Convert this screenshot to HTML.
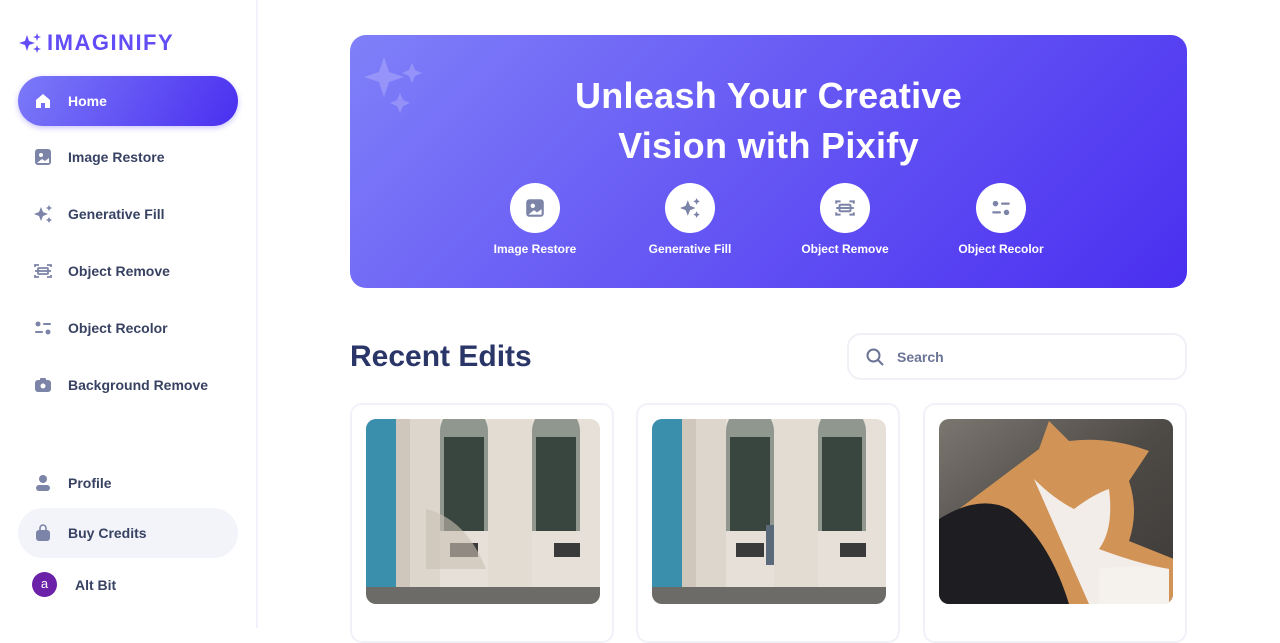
<!DOCTYPE html>
<html><head><meta charset="utf-8"><style>
*{box-sizing:border-box;margin:0;padding:0}
body{width:1280px;height:628px;overflow:hidden;background:#fff;font-family:"Liberation Sans",sans-serif;position:relative}
.side{position:absolute;left:0;top:0;width:258px;height:628px;border-right:2px solid #f1f2fb;background:#fff}
.logo{position:absolute;left:18px;top:30px;display:flex;align-items:center;gap:3px;color:#624cf5;font-weight:bold;font-size:22px;letter-spacing:1.5px}
.nav{position:absolute;left:18px;width:220px;height:50px;border-radius:25px;display:flex;align-items:center;padding-left:15px;gap:15px;font-size:14px;font-weight:bold;color:#384262}
.nav svg{width:20px;height:20px}
.home{background:linear-gradient(120deg,#7c7af8,#4a2ff0);color:#fff;box-shadow:0 2px 6px rgba(80,60,240,.3)}
.buy{background:#f3f4fa}
.main{position:absolute;left:258px;top:0;right:0;bottom:0}
.hero{position:absolute;left:92px;top:35px;width:837px;height:253px;border-radius:16px;background:linear-gradient(135deg,#8080f9 0%,#6a5ef5 40%,#4a2ff0 100%)}
.hero h1{position:absolute;top:36px;left:0;right:0;text-align:center;color:#fff;font-size:36px;line-height:50px;font-weight:bold;letter-spacing:.3px}
.feat{position:absolute;top:148px;width:120px;text-align:center;color:#fff;font-size:12px;font-weight:bold}
.feat .c{width:50px;height:50px;border-radius:50%;background:#fff;margin:0 auto 9px;display:flex;align-items:center;justify-content:center}
.feat svg{width:22px;height:22px}
.rec{position:absolute;left:92px;top:340px;font-size:30px;font-weight:bold;color:#2b3668}
.search{position:absolute;left:589px;top:333px;width:340px;height:47px;border:2px solid #f0f1f7;border-radius:14px;display:flex;align-items:center;padding-left:16px;gap:12px;color:#6b7495;font-size:14px;font-weight:bold}
.card{position:absolute;top:403px;width:264px;height:240px;border:2px solid #f1f2f9;border-radius:12px}
.img{position:absolute;left:14px;top:14px;width:234px;height:185px;border-radius:10px;overflow:hidden}
.img svg{display:block}
</style></head><body>
<div class="side">
<div class="logo"><svg width="26" height="24" viewBox="0 0 26 24"><path d="M9 4l2 6 6 2-6 2-2 6-2-6-6-2 6-2z" fill="#624cf5"/><path d="M19 2l1 3 3 1-3 1-1 3-1-3-3-1 3-1z" fill="#624cf5"/><path d="M19 14l1 3 3 1-3 1-1 3-1-3-3-1 3-1z" fill="#624cf5"/></svg>IMAGINIFY</div>
<div class="nav home" style="top:76px"><svg viewBox="0 0 20 20"><path d="M3 9l7-6 7 6v8h-5v-5h-4v5H3z" fill="#fff"/></svg>Home</div>
<div class="nav" style="top:132px"><svg viewBox="0 0 20 20"><rect x="2" y="2" width="16" height="16" rx="3" fill="#7c84a8"/><circle cx="8" cy="8" r="2" fill="#fff"/><path d="M4 16l5-4 3 2 4-3v5z" fill="#fff"/></svg>Image Restore</div>
<div class="nav" style="top:189px"><svg viewBox="0 0 20 20"><path d="M8 3l2 5 5 2-5 2-2 5-2-5-5-2 5-2z" fill="#7c84a8"/><path d="M16 1l1 2 2 1-2 1-1 2-1-2-2-1 2-1zM16 13l1 2 2 1-2 1-1 2-1-2-2-1 2-1z" fill="#7c84a8"/></svg>Generative Fill</div>
<div class="nav" style="top:246px"><svg viewBox="0 0 20 20" fill="none" stroke="#7c84a8" stroke-width="1.8"><path d="M2 6V4h4M14 4h4v2M2 14v2h4M14 16h4v-2"/><rect x="5" y="7" width="10" height="6" rx="1"/><path d="M2 10h16"/></svg>Object Remove</div>
<div class="nav" style="top:303px"><svg viewBox="0 0 20 20" fill="#7c84a8"><circle cx="5" cy="6" r="2.5"/><rect x="10" y="5" width="8" height="2" rx="1"/><rect x="2" y="13" width="8" height="2" rx="1"/><circle cx="15" cy="14" r="2.5"/></svg>Object Recolor</div>
<div class="nav" style="top:360px"><svg viewBox="0 0 20 20"><rect x="2" y="5" width="16" height="12" rx="3" fill="#7c84a8"/><rect x="7" y="3" width="6" height="3" rx="1" fill="#7c84a8"/><circle cx="10" cy="11" r="2.5" fill="#fff"/></svg>Background Remove</div>
<div class="nav" style="top:458px"><svg viewBox="0 0 20 20" fill="#7c84a8"><circle cx="10" cy="6" r="4"/><rect x="3" y="12" width="14" height="6" rx="3"/></svg>Profile</div>
<div class="nav buy" style="top:508px"><svg viewBox="0 0 20 20" fill="#7c84a8"><path d="M7 7V5a3 3 0 0 1 6 0v2" stroke="#7c84a8" stroke-width="1.6" fill="none"/><rect x="3" y="7" width="14" height="11" rx="3"/></svg>Buy Credits</div>
<div style="position:absolute;left:32px;top:572px;width:25px;height:25px;border-radius:50%;background:#6b21a8;color:#fff;font-size:13px;text-align:center;line-height:24px">a</div>
<div style="position:absolute;left:75px;top:577px;font-size:14px;font-weight:bold;color:#384262">Alt Bit</div>
</div>
<div class="main">
<div class="hero">
<svg style="position:absolute;left:12px;top:20px" width="64" height="64" viewBox="0 0 64 64" fill="rgba(255,255,255,.2)"><path d="M22 2l5 15 15 5-15 5-5 15-5-15-15-5 15-5z"/><path d="M50 8l3 7 7 3-7 3-3 7-3-7-7-3 7-3zM38 38l3 7 7 3-7 3-3 7-3-7-7-3 7-3z"/></svg>
<h1>Unleash Your Creative<br>Vision with Pixify</h1>
<div class="feat" style="left:125px"><div class="c"><svg viewBox="0 0 20 20"><rect x="2" y="2" width="16" height="16" rx="3" fill="#7c84a8"/><circle cx="8" cy="8" r="2" fill="#fff"/><path d="M4 16l5-4 3 2 4-3v5z" fill="#fff"/></svg></div>Image Restore</div>
<div class="feat" style="left:280px"><div class="c"><svg viewBox="0 0 20 20" fill="#7c84a8"><path d="M8 3l2 5 5 2-5 2-2 5-2-5-5-2 5-2z"/><path d="M16 1l1 2 2 1-2 1-1 2-1-2-2-1 2-1zM16 13l1 2 2 1-2 1-1 2-1-2-2-1 2-1z"/></svg></div>Generative Fill</div>
<div class="feat" style="left:435px"><div class="c"><svg viewBox="0 0 20 20" fill="none" stroke="#7c84a8" stroke-width="1.8"><path d="M2 6V4h4M14 4h4v2M2 14v2h4M14 16h4v-2"/><rect x="5" y="7" width="10" height="6" rx="1"/><path d="M2 10h16"/></svg></div>Object Remove</div>
<div class="feat" style="left:591px"><div class="c"><svg viewBox="0 0 20 20" fill="#7c84a8"><circle cx="5" cy="6" r="2.5"/><rect x="10" y="5" width="8" height="2" rx="1"/><rect x="2" y="13" width="8" height="2" rx="1"/><circle cx="15" cy="14" r="2.5"/></svg></div>Object Recolor</div>
</div>
<div class="rec">Recent Edits</div>
<div class="search"><svg width="20" height="20" viewBox="0 0 20 20" fill="none" stroke="#6b7495" stroke-width="2"><circle cx="8.5" cy="8.5" r="6"/><path d="M13 13l5 5"/></svg>Search</div>
<div class="card" style="left:92px"><div class="img"><svg width="234" height="185" viewBox="0 0 234 185">
<rect width="234" height="185" fill="#e6e0d8"/>
<rect x="0" y="0" width="30" height="168" fill="#3a8fad"/><rect x="30" y="0" width="14" height="168" fill="#cfc7bb"/>
<rect x="44" y="0" width="30" height="168" fill="#ddd6cc"/><rect x="122" y="0" width="44" height="168" fill="#e2dcd3"/>
<path d="M74 12a24 24 0 0 1 48 0v100H74z" fill="#8f978f"/><rect x="78" y="18" width="40" height="94" fill="#39463f"/>
<path d="M166 12a24 24 0 0 1 48 0v100h-48z" fill="#8f978f"/><rect x="170" y="18" width="40" height="94" fill="#39463f"/>
<rect x="84" y="124" width="28" height="14" fill="#3a3a3a"/><rect x="188" y="124" width="26" height="14" fill="#3a3a3a"/>
<path d="M60 90q40 10 60 60h-60z" fill="#c9c0b4" opacity=".6"/>
<rect x="0" y="168" width="234" height="17" fill="#6d6b68"/>
</svg></div></div>
<div class="card" style="left:378px"><div class="img"><svg width="234" height="185" viewBox="0 0 234 185">
<rect width="234" height="185" fill="#e6e0d8"/>
<rect x="0" y="0" width="30" height="168" fill="#3a8fad"/><rect x="30" y="0" width="14" height="168" fill="#cfc7bb"/>
<rect x="44" y="0" width="30" height="168" fill="#ddd6cc"/><rect x="122" y="0" width="44" height="168" fill="#e2dcd3"/>
<path d="M74 12a24 24 0 0 1 48 0v100H74z" fill="#8f978f"/><rect x="78" y="18" width="40" height="94" fill="#39463f"/>
<path d="M166 12a24 24 0 0 1 48 0v100h-48z" fill="#8f978f"/><rect x="170" y="18" width="40" height="94" fill="#39463f"/>
<rect x="84" y="124" width="28" height="14" fill="#3a3a3a"/><rect x="188" y="124" width="26" height="14" fill="#3a3a3a"/>
<rect x="114" y="106" width="8" height="40" fill="#5a6a7a"/>
<rect x="0" y="168" width="234" height="17" fill="#6d6b68"/>
</svg></div></div>
<div class="card" style="left:665px"><div class="img"><svg width="234" height="185" viewBox="0 0 234 185">
<defs><linearGradient id="bg" x1="0" y1="0" x2="1" y2="1"><stop offset="0" stop-color="#7b7670"/><stop offset=".5" stop-color="#4e4a46"/><stop offset="1" stop-color="#3c3a38"/></linearGradient></defs>
<rect width="234" height="185" fill="url(#bg)"/>
<path d="M20 90q40-30 80-60l10-28 20 20q40-5 80 10l-20 30q10 30 0 60l50 20v43H60z" fill="#d19456"/>
<path d="M95 60q20 20 40 30 20-15 35-20 5 40-10 60 40 15 70 20v35H150z" fill="#f2ede8"/>
<path d="M0 100q40-25 70-10 40 30 60 95H0z" fill="#1e1e22"/>
<path d="M160 150q40-5 70 0v35h-70z" fill="#f5f1ed"/>
</svg></div></div>
</div>
</body></html>
